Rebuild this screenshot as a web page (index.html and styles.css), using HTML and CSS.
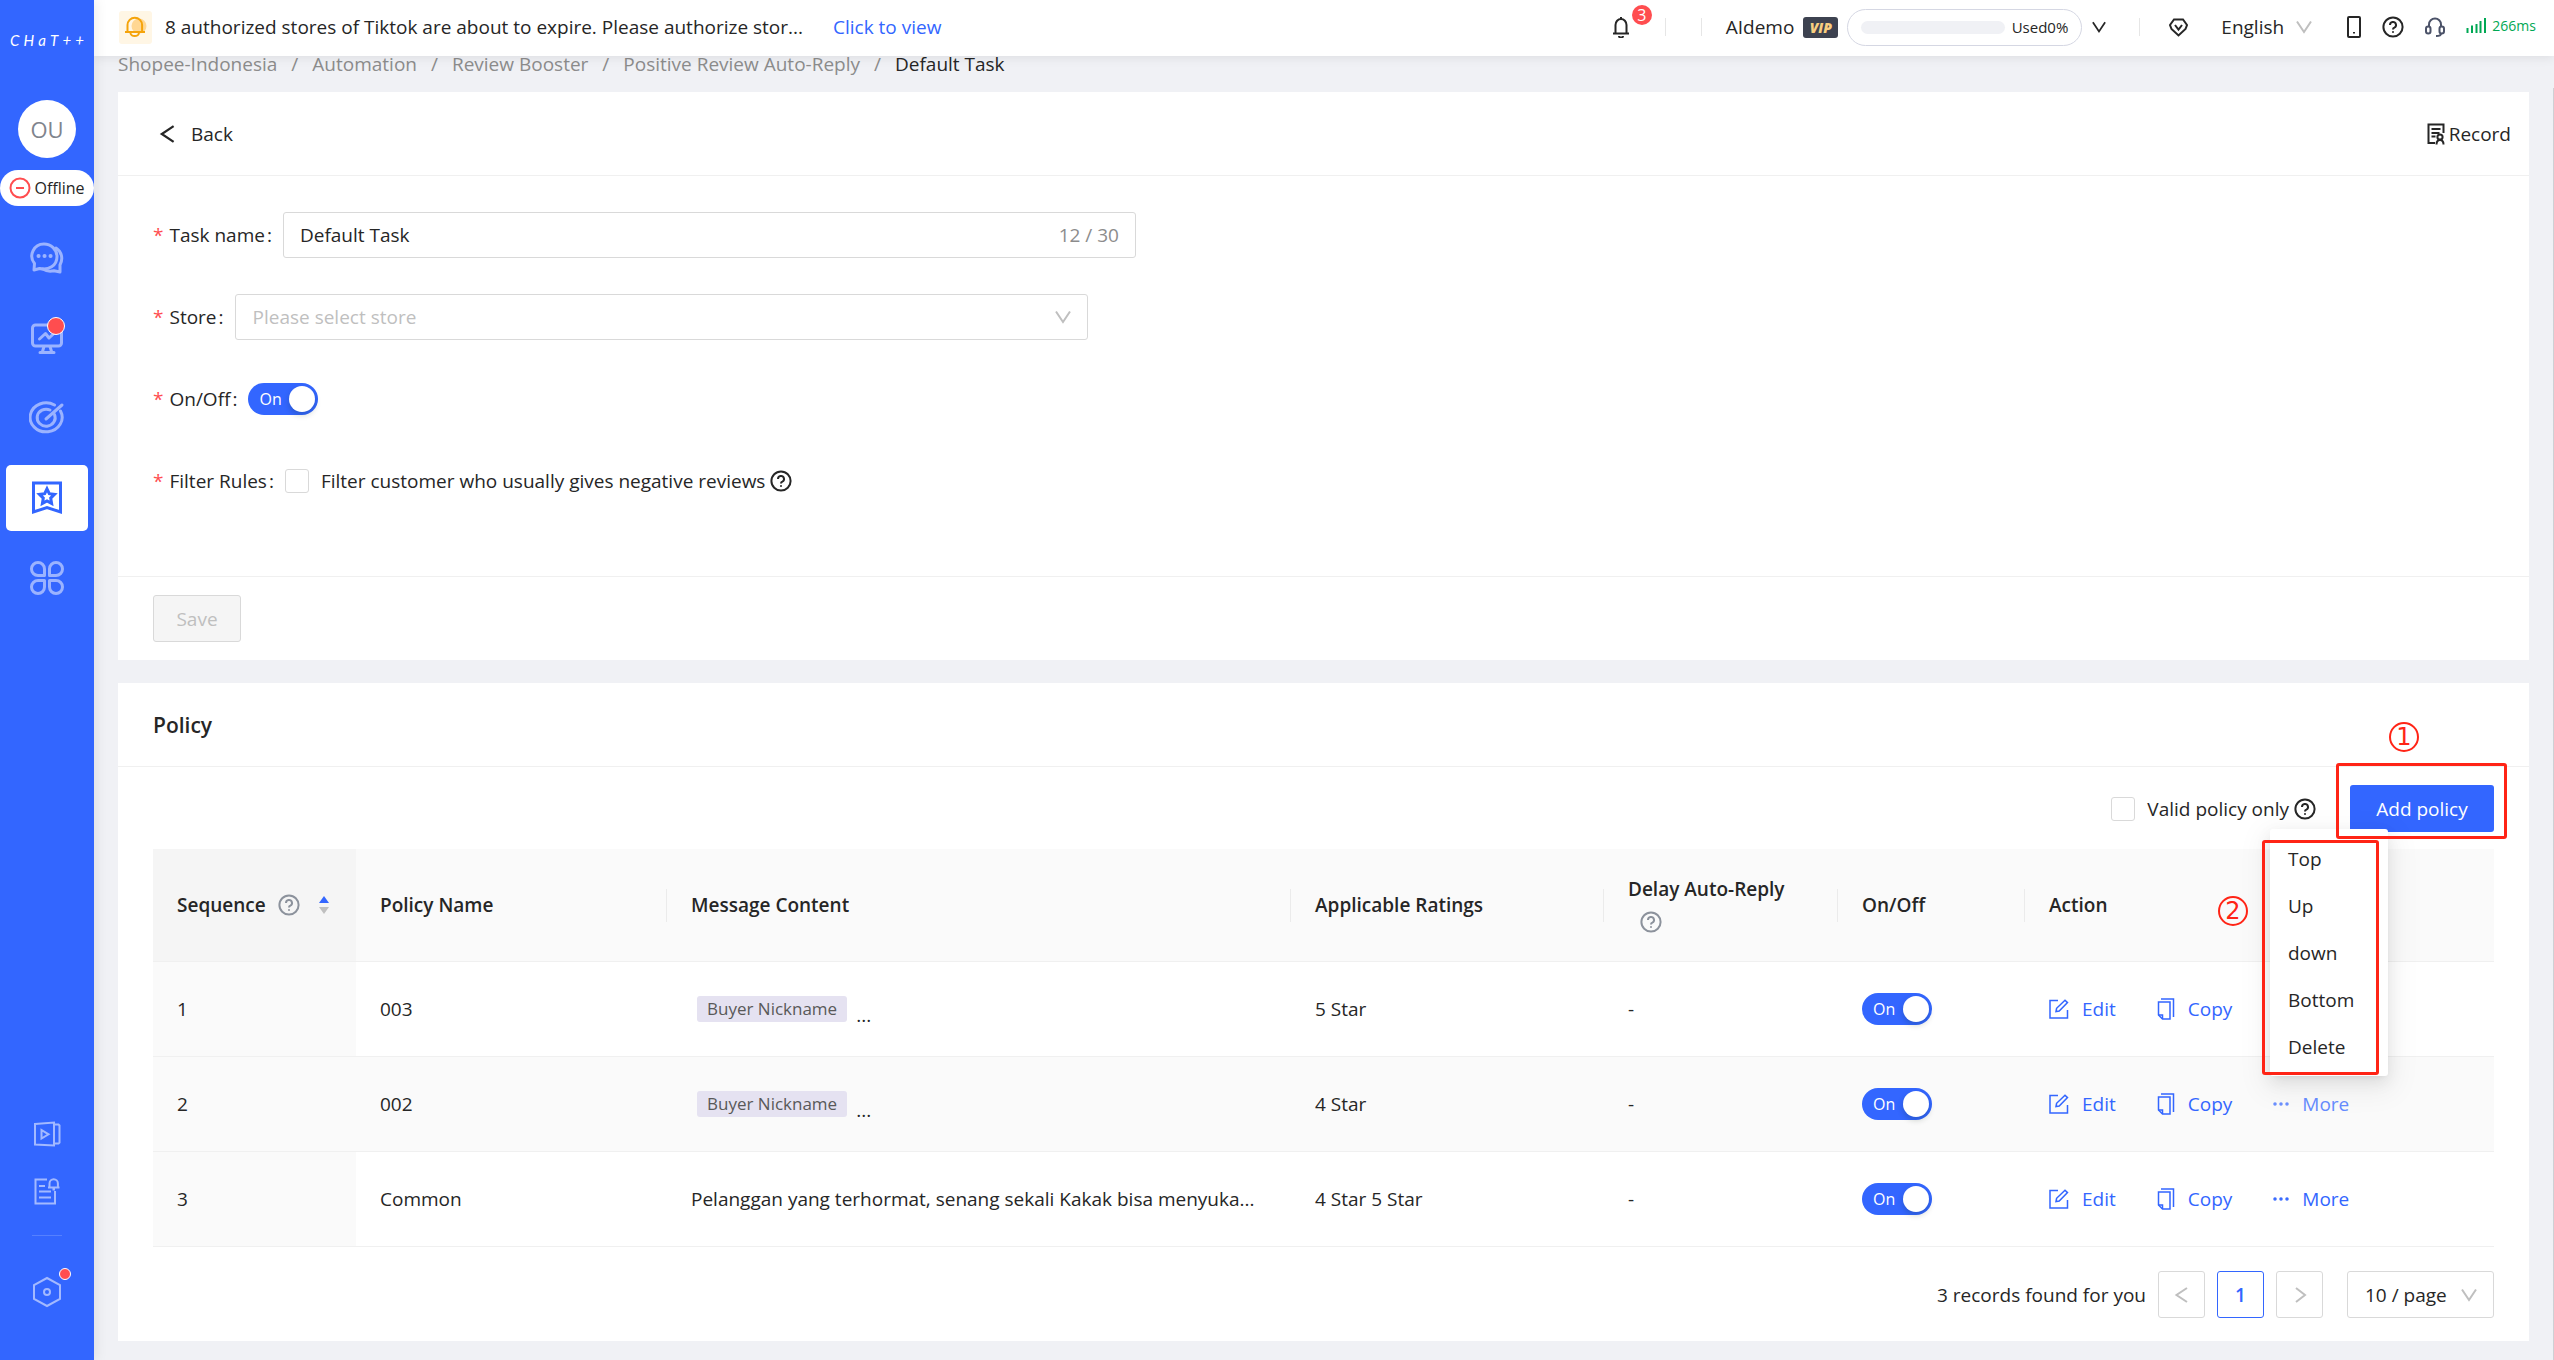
FILE: index.html
```html
<!DOCTYPE html>
<html lang="en">
<head>
<meta charset="utf-8">
<meta name="viewport" content="width=device-width, initial-scale=1">
<title>Default Task</title>
<link rel="stylesheet" href="styles.css">
</head>
<body>
<svg class="sprite" aria-hidden="true">
  <symbol id="question" viewBox="0 0 22 22"><circle cx="11" cy="11" r="9.6"/><path d="M8 9a3 3 0 1 1 4.300 2.700c-.9.4-1.300.9-1.300 1.800"/><path d="M11 15.300v1.500"/></symbol>
  <symbol id="down" viewBox="0 0 16 16"><path d="M1 2.500 8 13 15 2.500"/></symbol>
  <symbol id="left" viewBox="0 0 16 16"><path d="M13 1 2.500 8 13 15"/></symbol>
  <symbol id="right" viewBox="0 0 16 16"><path d="M4 1 13 8 4 15"/></symbol>
  <symbol id="edit" viewBox="0 0 20 20"><path d="M9 1.500H1V19h17.500v-8"/><path d="m7 12.500.6-3.200L16 1.200 18.500 3.600 10.200 12z"/></symbol>
  <symbol id="copy" viewBox="0 0 18 22"><path d="M4 1h12.500v18"/><path d="M1.500 4H13v17H5.500L1.500 17z"/><path d="M1.500 17H5.500v4"/></symbol>
  <symbol id="dots" viewBox="0 0 16 4"><circle cx="2" cy="2" r="1"/><circle cx="8" cy="2" r="1"/><circle cx="14" cy="2" r="1"/></symbol>
</svg>
<div class="app">
  <aside class="sidebar">
    <div class="logo" aria-label="CHAT++"><span>C</span><span>H</span><span>a</span><span>T</span><span>+</span><span>+</span></div>
    <div class="avatar">OU</div>
    <button class="status" type="button">
      <svg width="22" height="22" viewBox="0 0 22 22" aria-hidden="true"><circle cx="11" cy="11" r="9.500"/><path d="M7 11h8"/></svg>Offline
    </button>
    <nav class="nav" aria-label="Main">
      <a href="#chat" aria-label="Chat"><svg width="34" height="32" viewBox="0 0 34 32"><path d="M14 2a12 12 0 0 0-9.500 19.500L4 28l5.500-1.500c9 2 17.500-2.500 17.500-12C27 7.500 21 2 14 2z"/><path d="M26 6c5.500 3.500 7.500 10.500 4 17v7l-6-1.200c-5 1-8.500 0-11-1.800"/><path class="dots" d="M8.500 14h.1M14.500 14h.1M20.500 14h.1"/></svg></a>
      <a href="#monitor" aria-label="Monitor" class="has-dot"><svg width="34" height="34" viewBox="0 0 34 34"><rect x="2.500" y="4" width="29" height="21" rx="3"/><path d="m9.500 18 6-5.500 3.500 4.500 6-5.500M14 25.500l-1.500 5M20 25.500l1.500 5M10 31.500h14"/></svg><i class="dot"></i></a>
      <a href="#target" aria-label="Targets"><svg width="36" height="36" viewBox="0 0 36 36"><path d="M31.500 11a16 14.500 0 1 1-6-6"/><path d="M25.500 14.500a9 8.500 0 1 1-4.500-4.500"/><path d="M17 19 33 5"/></svg></a>
      <a href="#automation" aria-label="Automation" class="active"><svg width="32" height="34" viewBox="0 0 32 34"><path d="M2.500 2h27v29L16 26.500 2.500 31z"/><path d="m16 7.800 2.300 4.900 5.200.7-3.800 3.700.9 5.300-4.600-2.500-4.600 2.500.9-5.300-3.800-3.700 5.200-.7z"/></svg></a>
      <a href="#apps" aria-label="Apps"><svg width="36" height="36" viewBox="0 0 36 36"><path d="M15.500 15.500H9A6.500 6.500 0 1 1 15.500 9zM20.500 15.500H27A6.500 6.500 0 1 0 20.500 9zM15.500 20.500H9a6.500 6.500 0 1 0 6.500 6.500zM20.500 20.500H27a6.500 6.500 0 1 1-6.500 6.500z"/></svg></a>
    </nav>
    <nav class="nav-bottom" aria-label="Support">
      <a href="#video" aria-label="Tutorials"><svg width="28" height="26" viewBox="0 0 28 26"><path d="M2 3 21 1.500v23L2 23.500zM22 3.500h3.500l1 1v17l-1 1H22M8.500 9v8.500l7-4.200z"/></svg></a>
      <a href="#news" aria-label="News"><svg width="28" height="28" viewBox="0 0 28 28"><path d="M14 2.500H2.500v24H22V14M6 9h6M6 14.500h12M6 20.500h12"/><path d="M15 10.500h11.500M16.500 10.500v-4a4.200 4.200 0 0 1 8.400 0v4M19.500 12.500h2.500"/></svg></a>
      <hr>
      <a href="#settings" aria-label="Settings" class="has-dot small"><svg width="30" height="32" viewBox="0 0 30 32"><path d="M15 2 28 9v14L15 30 2 23V9z"/><circle cx="15" cy="16" r="3"/></svg><i class="dot"></i></a>
    </nav>
  </aside>

  <div class="page">
    <header class="topbar">
      <span class="notice-icon"><svg width="24" height="22" viewBox="0 0 24 22" aria-hidden="true"><circle cx="15" cy="10" r="7.500" fill="#ffd793" stroke="none"/><path d="M3.500 16V9a7.300 7.300 0 0 1 14.600 0v7M1 16h20M6.500 17a4.200 3 0 0 0 8.400 0" fill="none" stroke="#f5a30a" stroke-width="2"/></svg></span>
      <span class="notice">8 authorized stores of Tiktok are about to expire. Please authorize stor...</span>
      <a class="notice-link" href="#view">Click to view</a>
      <div class="tools">
        <button class="icon-btn bell" type="button" aria-label="Notifications"><svg width="18" height="22" viewBox="0 0 18 22"><path d="M3.500 17.500V9a5.500 6 0 0 1 11 0v8.500M1 17.500h16M9 3V1M7 20a2 1.500 0 0 0 4 0"/></svg><span class="count">3</span></button>
        <i class="sep sep-a"></i><i class="sep sep-b"></i>
        <span class="user">AIdemo</span>
        <span class="vip">VIP</span>
        <span class="quota"><span class="bar"></span>Used0%</span>
        <button class="icon-btn quota-toggle" type="button" aria-label="Show quota"><svg width="14" height="14"><use href="#down"/></svg></button>
        <i class="sep sep-c"></i>
        <button class="icon-btn tag" type="button" aria-label="Version"><svg width="19" height="19" viewBox="0 0 19 19"><path d="M5 1.500h9l4 5.500-1.500 4L9.500 17.500 2.500 11 1 7z"/><path d="m6 7 3.500 4.500L13 7"/></svg></button>
        <span class="picker language"><select aria-label="Language"><option>English</option></select><svg width="16" height="16"><use href="#down"/></svg></span>
        <button class="icon-btn" type="button" aria-label="Mobile"><svg width="14" height="22" viewBox="0 0 14 22"><rect x="1" y="1" width="12" height="20" rx="1"/><path d="M7 16v1.500"/></svg></button>
        <button class="icon-btn" type="button" aria-label="Help"><svg width="22" height="22"><use href="#question"/></svg></button>
        <button class="icon-btn headset" type="button" aria-label="Support"><svg width="20" height="20" viewBox="0 0 20 20"><path d="M4 10V7.500a6 6 0 0 1 12 0V10M16 16.500c0 1.500-1.500 2.500-5 2.500"/><rect x="1" y="9.500" width="4.500" height="7" rx="2.200"/><rect x="14.500" y="9.500" width="4.500" height="7" rx="2.200"/></svg></button>
        <span class="signal"><svg width="20" height="15" viewBox="0 0 20 15" aria-hidden="true"><path d="M1.500 10v5M6 7.500V15M10.500 6v9M14.500 3v12M19 0v15"/></svg>266ms</span>
      </div>
    </header>

    <main class="content">
      <nav class="crumbs" aria-label="Breadcrumb"><a href="#s">Shopee-Indonesia</a><i>/</i><a href="#a">Automation</a><i>/</i><a href="#r">Review Booster</a><i>/</i><a href="#p">Positive Review Auto-Reply</a><i>/</i><span>Default Task</span></nav>

      <section class="card">
        <div class="card-head">
          <button class="back" type="button"><svg width="18" height="18"><use href="#left"/></svg>Back</button>
          <button class="record" type="button"><svg width="18" height="22" viewBox="0 0 18 22" aria-hidden="true"><path d="M16.500 10V1.500H1.500V20H8M4.500 6h9M4.500 10h8M4.500 13.500h4"/><circle cx="13" cy="14" r="2.600"/><path d="M9.500 21.500c0-3 1.500-4.500 3.500-4.500s3.500 1.500 3.500 4.500"/></svg>Record</button>
        </div>
        <form class="form">
          <div class="field"><label for="task">Task name</label><span class="text-input"><input id="task" type="text" value="Default Task" maxlength="30"><span class="counter">12 / 30</span></span></div>
          <div class="field"><label for="store">Store</label><span class="picker store"><select id="store"><option>Please select store</option></select><svg width="16" height="16"><use href="#down"/></svg></span></div>
          <div class="field"><label for="enabled">On/Off</label><span class="switch"><input id="enabled" type="checkbox" role="switch" checked><span>On</span></span></div>
          <div class="field"><label for="filter">Filter Rules</label><label class="check"><input id="filter" type="checkbox">Filter customer who usually gives negative reviews</label><svg class="help" width="22" height="22"><use href="#question"/></svg></div>
        </form>
        <div class="card-foot"><button class="save" type="button" disabled>Save</button></div>
      </section>

      <section class="card">
        <div class="card-head"><h2>Policy</h2></div>
        <div class="policy">
          <div class="toolbar">
            <label class="check"><input type="checkbox">Valid policy only</label><svg class="help" width="22" height="22"><use href="#question"/></svg>
            <div class="add"><button class="primary" type="button">Add policy</button><span class="mark"></span><span class="step step-one">1</span></div>
          </div>
          <table>
            <colgroup><col class="c-seq"><col class="c-name"><col><col class="c-rate"><col class="c-delay"><col class="c-on"><col class="c-act"></colgroup>
            <thead>
              <tr>
                <th scope="col" class="sorted"><span class="sort-head">Sequence<svg class="hint" width="22" height="22"><use href="#question"/></svg><svg class="sorter" width="12" height="20" viewBox="0 0 12 20"><path d="M6 1l5 7H1z" fill="#36f"/><path d="M6 19l5-7H1z" fill="#bfbfbf"/></svg></span></th>
                <th scope="col">Policy Name</th>
                <th scope="col">Message Content</th>
                <th scope="col">Applicable Ratings</th>
                <th scope="col">Delay Auto-Reply <svg class="hint" width="22" height="22"><use href="#question"/></svg></th>
                <th scope="col">On/Off</th>
                <th scope="col">Action</th>
              </tr>
            </thead>
            <tbody>
              <tr>
                <td>1</td><td>003</td><td><div class="message"><span class="chip">Buyer Nickname</span><span class="more-text">...</span></div></td><td>5 Star</td><td>-</td>
                <td><label class="switch"><input type="checkbox" role="switch" aria-label="Policy 003" checked><span>On</span></label></td>
                <td class="menu-cell"><div class="actions"><a href="#e1"><svg width="20" height="20"><use href="#edit"/></svg>Edit</a><a href="#c1"><svg width="18" height="22"><use href="#copy"/></svg>Copy</a></div>
                  <div class="menu"><button type="button">Top</button><button type="button">Up</button><button type="button">down</button><button type="button">Bottom</button><button type="button">Delete</button><span class="mark"></span><span class="step step-two">2</span></div></td>
              </tr>
              <tr>
                <td>2</td><td>002</td><td><div class="message"><span class="chip">Buyer Nickname</span><span class="more-text">...</span></div></td><td>4 Star</td><td>-</td>
                <td><label class="switch"><input type="checkbox" role="switch" aria-label="Policy 002" checked><span>On</span></label></td>
                <td><div class="actions"><a href="#e2"><svg width="20" height="20"><use href="#edit"/></svg>Edit</a><a href="#c2"><svg width="18" height="22"><use href="#copy"/></svg>Copy</a><a class="soft" href="#m2"><svg width="16" height="4"><use href="#dots"/></svg>More</a></div></td>
              </tr>
              <tr>
                <td>3</td><td>Common</td><td>Pelanggan yang terhormat, senang sekali Kakak bisa menyuka...</td><td>4 Star 5 Star</td><td>-</td>
                <td><label class="switch"><input type="checkbox" role="switch" aria-label="Policy Common" checked><span>On</span></label></td>
                <td><div class="actions"><a href="#e3"><svg width="20" height="20"><use href="#edit"/></svg>Edit</a><a href="#c3"><svg width="18" height="22"><use href="#copy"/></svg>Copy</a><a href="#m3"><svg width="16" height="4"><use href="#dots"/></svg>More</a></div></td>
              </tr>
            </tbody>
          </table>
          <div class="pager">
            <span>3 records found for you</span>
            <button type="button" aria-label="Previous page"><svg width="16" height="16"><use href="#left"/></svg></button>
            <button type="button" class="current">1</button>
            <button type="button" aria-label="Next page"><svg width="16" height="16"><use href="#right"/></svg></button>
            <span class="picker size"><select aria-label="Page size"><option>10 / page</option></select><svg width="16" height="16"><use href="#down"/></svg></span>
          </div>
        </div>
      </section>
    </main>
  </div>
</div>
</body>
</html>
```
FILE: styles.css
```css
* { box-sizing: border-box; }
body {
  margin: 0;
  background: #f0f1f5;
  color: #262626;
  font: 19px/24px "Open Sans", "Liberation Sans", sans-serif;
}
button, input, select { font: inherit; color: inherit; margin: 0; }
button { padding: 0; border: 0; background: none; cursor: pointer; }
a { color: #36f; text-decoration: none; }
svg { flex: none; fill: none; stroke: currentColor; stroke-width: 2; }
.sprite { position: absolute; width: 0; height: 0; }
.app { display: flex; min-height: 100vh; }

/* Sidebar */
.sidebar {
  position: relative;
  z-index: 3;
  flex: none;
  display: flex;
  flex-direction: column;
  align-items: center;
  width: 94px;
  padding: 28px 0 52px;
  background: #36f;
  box-shadow: 2px 0 12px rgba(0, 0, 0, .08);
}
.logo {
  display: flex;
  justify-content: space-between;
  width: 74px;
  margin-bottom: 48px;
  color: #fff;
  font: italic 400 15px/24px Lato, sans-serif;
}
.avatar {
  width: 58px;
  height: 58px;
  margin-bottom: 12px;
  border-radius: 50%;
  background: #fff;
  color: #7f848d;
  font-size: 22px;
  line-height: 58px;
  text-align: center;
}
.status {
  display: flex;
  align-items: center;
  justify-content: center;
  gap: 3px;
  width: 94px;
  height: 36px;
  margin-bottom: 19px;
  border-radius: 18px;
  background: #fff;
  font-size: 16px;
}
.status svg { color: #ff4d4f; }
.nav, .nav-bottom { display: flex; flex-direction: column; align-items: center; }
.nav { gap: 14px; }
.nav a {
  position: relative;
  display: grid;
  place-items: center;
  width: 82px;
  height: 66px;
  border-radius: 5px;
  color: #9bb3ff;
}
.nav svg { stroke-width: 3; stroke-linejoin: round; stroke-linecap: round; }
.nav .active { background: #fff; color: #36f; }
.nav .active svg { stroke-linejoin: miter; }
.nav .dots { stroke-width: 4; }
.nav-bottom { gap: 30px; margin-top: auto; color: #a3b9ff; }
.nav-bottom a { position: relative; display: grid; color: #a3b9ff; }
.nav-bottom hr { width: 30px; margin: 0; border: 0; border-top: 1px solid #5580ff; }
.nav-bottom .small { margin-top: 10px; }
.dot {
  position: absolute;
  top: 12px;
  right: 23px;
  width: 18px;
  height: 18px;
  border: 1px solid #fff;
  border-radius: 50%;
  background: #ff4d4f;
}
.small .dot { top: -8px; right: -9px; width: 12px; height: 12px; }

/* Top bar */
.page { flex: 1; min-width: 0; display: flex; flex-direction: column; }
.topbar {
  position: relative;
  z-index: 2;
  display: flex;
  align-items: center;
  height: 56px;
  padding: 0 18px 2px 25px;
  background: #fff;
  box-shadow: 0 2px 10px rgba(0, 0, 0, .08);
}
.notice-icon {
  display: grid;
  place-items: center;
  width: 33px;
  height: 33px;
  margin-right: 13px;
  border-radius: 3px;
  background: #fff6e5;
}
.notice {
  flex: 0 1 650px;
  margin-right: 18px;
  overflow: hidden;
  text-overflow: ellipsis;
  white-space: nowrap;
}
.tools { display: flex; align-items: center; gap: 21px; margin-left: auto; }
.icon-btn { position: relative; display: grid; }
.headset { color: #4b5268; }
.bell { margin-right: 14px; }
.count {
  position: absolute;
  left: 20px;
  top: -11px;
  width: 20px;
  height: 20px;
  border-radius: 10px;
  background: #ff4d4f;
  color: #fff;
  font-size: 16px;
  line-height: 20px;
}
.sep { width: 1px; height: 18px; background: #e6e6e6; }
.sep-a { margin-right: 14px; }
.sep-b { margin-right: 3px; }
.sep-c { margin: 0 8px 0 12px; }
.user { margin-right: -12px; }
.vip {
  width: 35px;
  height: 21px;
  margin-right: -12px;
  border-radius: 3px;
  background: #3d4250;
  color: #f8cf80;
  font: italic 800 14px/21px "Open Sans", sans-serif;
  text-align: center;
}
.quota {
  display: flex;
  align-items: center;
  gap: 7px;
  width: 235px;
  height: 37px;
  padding: 0 13px;
  margin-right: -11px;
  border: 1px solid #d5d7e3;
  border-radius: 19px;
  font-size: 15px;
}
.bar { flex: 1; height: 13px; border-radius: 7px; background: #f0f1f5; }
.tag { margin-right: 12px; }
.signal { display: flex; align-items: center; gap: 6px; color: #00a854; font-size: 14px; line-height: 18px; padding-bottom: 3px; }

/* Select with its own chevron */
.picker { display: inline-grid; align-items: center; }
.picker select {
  grid-area: 1 / 1;
  width: 100%;
  height: 100%;
  padding: 0 17px;
  border: 1px solid #d9d9d9;
  border-radius: 3px;
  background: #fff;
  appearance: none;
}
.picker svg { grid-area: 1 / 1; justify-self: end; margin-right: 17px; color: #bfbfbf; pointer-events: none; }
.language { width: 91px; margin-right: 14px; }
.language select { padding: 0; border: 0; }
.language svg { margin-right: 0; }
.store { width: 853px; height: 46px; }
.store select { color: #bfbfbf; }
.size { width: 147px; height: 47px; margin-left: 12px; }

/* Content */
.content { position: relative; flex: 1; padding: 0 25px 18px 24px; }
.content::after {
  content: "";
  position: absolute;
  top: 32px;
  right: 0;
  bottom: 0;
  width: 1px;
  background: #cfd0d4;
}
.crumbs { display: flex; gap: 14px; margin-bottom: 20px; line-height: 16px; color: #8c8c8c; }
.crumbs a { color: inherit; }
.crumbs i { font-style: normal; }
.crumbs span { color: #262626; }
.card { margin-bottom: 23px; background: #fff; }
.card:last-child { margin-bottom: 0; }
.card-head {
  display: flex;
  align-items: center;
  justify-content: space-between;
  height: 84px;
  padding: 0 18px 0 35px;
  border-bottom: 1px solid #f0f0f0;
}
.card-head h2 { margin: 0; font-size: 21px; font-weight: 600; }
.back { display: flex; align-items: center; gap: 14px; padding-left: 6px; }
.record { display: flex; align-items: center; gap: 4px; }

.form { display: grid; gap: 36px; padding: 36px 35px 72px; }
.field { display: flex; align-items: center; height: 46px; }
.field > label:first-child { margin-right: 11px; }
.field > label:first-child::before { content: "*"; margin-right: 6px; color: #ff4d4f; }
.field > label:first-child::after { content: ":"; margin-left: 2px; }
.text-input {
  display: flex;
  align-items: center;
  width: 853px;
  height: 46px;
  padding: 0 16px;
  border: 1px solid #d9d9d9;
  border-radius: 3px;
}
.text-input input { flex: 1; min-width: 0; padding: 0; border: 0; outline: 0; }
.counter { color: #8c8c8c; }
.check { display: flex; align-items: center; gap: 12px; }
.check input {
  width: 24px;
  height: 24px;
  border: 1px solid #d9d9d9;
  border-radius: 3px;
  background: #fff;
  appearance: none;
}
.help { margin-left: 5px; }
.switch {
  position: relative;
  display: block;
  width: 70px;
  height: 32px;
  padding-left: 11px;
  border-radius: 16px;
  background: #36f;
  color: #fff;
  font-size: 16px;
  line-height: 32px;
}
.switch input { position: absolute; inset: 0; width: 100%; height: 100%; opacity: 0; }
.switch::after {
  content: "";
  position: absolute;
  top: 3px;
  right: 3px;
  width: 26px;
  height: 26px;
  border-radius: 50%;
  background: #fff;
  box-shadow: 0 3px 6px rgba(0, 35, 11, .2);
}
.card-foot { padding: 18px 35px; border-top: 1px solid #f0f0f0; }
.save {
  display: block;
  height: 47px;
  width: 88px;
  border: 1px solid #d9d9d9;
  border-radius: 3px;
  background: #f5f5f5;
  color: #bfbfbf;
}

/* Policy list */
.policy { padding: 18px 35px 23px; }
.toolbar { display: flex; align-items: center; justify-content: flex-end; margin-bottom: 17px; }
.add { position: relative; margin-left: 34px; }
.primary { display: block; width: 144px; height: 47px; border-radius: 3px; background: #36f; color: #fff; }
.mark {
  position: absolute;
  z-index: 3;
  inset: -22px -13px -7px -14px;
  border: 3px solid #ff2416;
  border-radius: 3px;
  pointer-events: none;
}
.step {
  position: absolute;
  z-index: 3;
  width: 30px;
  height: 30px;
  border: 2px solid #ff2416;
  border-radius: 50%;
  color: #ff2416;
  font: 24px/26px "DejaVu Sans", sans-serif;
  text-align: center;
}
.step-one { top: -63px; left: 39px; }
.step-two { top: 67px; left: -52px; }

table { width: 100%; border-collapse: separate; border-spacing: 0; table-layout: fixed; }
.c-seq { width: 203px; }
.c-name { width: 311px; }
.c-rate { width: 313px; }
.c-delay { width: 234px; }
.c-on { width: 187px; }
.c-act { width: 469px; }
th, td { padding: 0 24px; border-bottom: 1px solid #f0f0f0; text-align: left; }
th {
  position: relative;
  height: 113px;
  background: #fafafa;
  font-weight: 600;
  line-height: 31px;
}
th.sorted { background: #f5f5f5; }
th:not(:first-child):not(:last-child)::after {
  content: "";
  position: absolute;
  top: 40px;
  right: 0;
  width: 1px;
  height: 33px;
  background: #ebebeb;
}
.sort-head { display: flex; align-items: center; white-space: nowrap; }
.hint { margin-left: 12px; color: #8c929c; vertical-align: middle; }
.sorter { margin-left: 18px; stroke: none; }
td { height: 95px; white-space: nowrap; }
td:first-child, tbody tr:nth-child(2) td { background: #fafafa; }
.message { display: flex; align-items: flex-end; gap: 9px; padding-left: 6px; }
.chip { padding: 0 10px; border-radius: 3px; background: #e5e2f1; color: #595959; font-size: 17px; line-height: 26px; }
.more-text { line-height: 14px; }
.actions { display: flex; align-items: center; }
.actions a { display: flex; align-items: center; gap: 13px; margin-right: 41px; }
.actions svg { stroke-width: 1.5; }
.actions .soft { color: #668cff; }
.menu-cell { position: relative; }
.menu {
  position: absolute;
  z-index: 2;
  left: 245px;
  bottom: -20px;
  display: grid;
  width: 118px;
  padding: 6px 0;
  border-radius: 3px;
  background: #fff;
  box-shadow: 0 9px 28px 8px rgba(0, 0, 0, .05), 0 6px 16px rgba(0, 0, 0, .08), 0 3px 6px -4px rgba(0, 0, 0, .12);
}
.menu button { height: 47px; padding-left: 18px; text-align: left; }
.menu .mark { inset: 11px 9px 1px -8px; }

.pager { display: flex; align-items: center; justify-content: flex-end; gap: 12px; margin-top: 24px; }
.pager button {
  display: grid;
  place-items: center;
  width: 47px;
  height: 47px;
  border: 1px solid #d9d9d9;
  border-radius: 3px;
  color: #bfbfbf;
}
.pager .current { border-color: #36f; color: #36f; font-weight: 600; }
```
